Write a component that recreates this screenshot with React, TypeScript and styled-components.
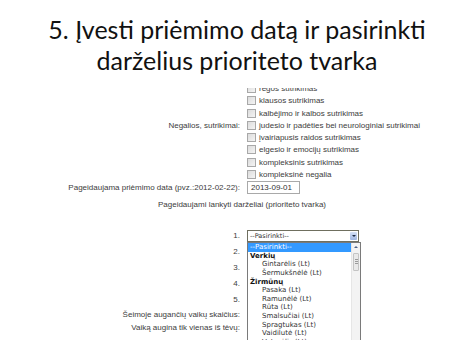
import React from "react";
import styled, { createGlobalStyle } from "styled-components";

const GlobalStyle = createGlobalStyle`
  html, body {
    margin: 0;
    padding: 0;
    background: #ffffff;
  }
`;

// Slide
const Slide = styled.div`
  width: 474px;
  height: 355px;
  overflow: hidden;
  background: #ffffff;
  display: flex;
  flex-direction: column;
`;

const Title = styled.h1`
  margin: 0;
  padding-top: 14px;
  height: 74px;
  font-family: Lato, "Open Sans", sans-serif;
  font-weight: 400;
  font-size: 25px;
  line-height: 31px;
  text-align: center;
  color: #111111;
`;

// Cropped screenshot of the web form
const Shot = styled.div`
  height: 252px;
  overflow: hidden;
  font-family: "Liberation Sans", Arial, sans-serif;
  font-size: 8px;
  color: #3c3c3c;
`;

const Form = styled.div`
  display: flex;
  flex-direction: column;
  margin-top: -18px;
`;

const Row = styled.div<{ $h?: number; $mt?: number }>`
  display: grid;
  grid-template-columns: 240px 1fr;
  column-gap: 7px;
  align-items: center;
  height: ${(p) => (p.$h ? `${p.$h}px` : "auto")};
  margin-top: ${(p) => p.$mt ?? 0}px;
`;

const Label = styled.div`
  text-align: right;
  white-space: nowrap;
`;

const Caption = styled.div<{ $mt: number }>`
  margin-top: ${(p) => p.$mt}px;
  height: 10px;
  line-height: 10px;
  text-align: center;
  padding-left: 10px;
`;

const CheckList = styled.div`
  display: flex;
  flex-direction: column;
`;

const CheckRow = styled.div`
  display: flex;
  align-items: center;
  gap: 3px;
  height: 12.3px;
  white-space: nowrap;
`;

const Box = styled.span`
  width: 7px;
  height: 7px;
  border: 1px solid #a8a8a8;
  background: linear-gradient(135deg, #dcdcdc, #f4f4f4);
  flex-shrink: 0;
`;

const TextInput = styled.div`
  width: 48px;
  height: 11px;
  border: 1px solid #a9a9a9;
  padding-left: 3px;
  line-height: 11px;
  color: #333;
`;

const SelectWrap = styled.div`
  position: relative;
  width: 112px;
`;

const Select = styled.div`
  height: 10px;
  border: 1px solid #6f6f5f;
  display: flex;
  align-items: center;
  background: #fff;
  font-family: "DejaVu Sans", Verdana, sans-serif;
  font-size: 6.5px;
  color: #333;
`;

const SelectText = styled.span`
  flex: 1;
  padding-left: 2px;
`;

const ArrowBtn = styled.span`
  width: 7px;
  height: 8px;
  margin-right: 1px;
  border-radius: 1px;
  background: linear-gradient(#d5e1f6, #9fb6e2);
  display: flex;
  align-items: center;
  justify-content: center;
`;

const Tri = styled.span<{ $up?: boolean }>`
  width: 0;
  height: 0;
  border-left: 2px solid transparent;
  border-right: 2px solid transparent;
  ${(p) =>
    p.$up ? "border-bottom: 2px solid #4d6185;" : "border-top: 2px solid #1d2a44;"}
`;

// Open dropdown list lying over the form
const Popup = styled.div`
  position: absolute;
  top: 12px;
  left: 0;
  width: 112px;
  height: 110px;
  border: 1px solid #7a7a7a;
  background: #ffffff;
  display: flex;
  overflow: hidden;
  z-index: 2;
`;

const Options = styled.div`
  flex: 1;
  padding-top: 0.5px;
  font-family: "DejaVu Sans", Verdana, sans-serif;
  font-size: 7px;
  line-height: 8.6px;
  color: #333;
`;

const Option = styled.div<{ $kind?: "selected" | "group" | "item" }>`
  height: 8.6px;
  white-space: nowrap;
  padding-left: ${(p) => (p.$kind === "item" ? 14 : 2)}px;
  font-weight: ${(p) => (p.$kind === "group" ? 700 : 400)};
  color: ${(p) => (p.$kind === "selected" ? "#ffffff" : p.$kind === "group" ? "#111" : "#333")};
  background: ${(p) => (p.$kind === "selected" ? "#3399ff" : "transparent")};
`;

const Scrollbar = styled.div`
  width: 8px;
  background: #f3f3f3;
  border-left: 1px solid #e6e6e6;
  display: flex;
  flex-direction: column;
  align-items: center;
`;

const ScrollBtn = styled.div`
  width: 8px;
  height: 9px;
  display: flex;
  align-items: center;
  justify-content: center;
`;

const Thumb = styled.div`
  width: 6px;
  height: 18px;
  margin-top: 1px;
  border: 1px solid #c4c4c4;
  border-radius: 1px;
  box-sizing: border-box;
  background: #e9e9e9;
  display: flex;
  flex-direction: column;
  align-items: center;
  justify-content: center;
  gap: 1px;
`;

const Grip = styled.span`
  width: 3px;
  height: 1px;
  background: #9a9a9a;
`;

const checks = [
  "intelekto sutrikimas",
  "regos sutrikimas",
  "klausos sutrikimas",
  "kalbėjimo ir kalbos sutrikimas",
  "judesio ir padėties bei neurologiniai sutrikimai",
  "įvairiapusis raidos sutrikimas",
  "elgesio ir emocijų sutrikimas",
  "kompleksinis sutrikimas",
  "kompleksinė negalia",
];

const options: { text: string; kind: "selected" | "group" | "item" }[] = [
  { text: "--Pasirinkti--", kind: "selected" },
  { text: "Verkių", kind: "group" },
  { text: "Gintarėlis (Lt)", kind: "item" },
  { text: "Šermukšnėlė (Lt)", kind: "item" },
  { text: "Žirmūnų", kind: "group" },
  { text: "Pasaka (Lt)", kind: "item" },
  { text: "Ramunėlė (Lt)", kind: "item" },
  { text: "Rūta (Lt)", kind: "item" },
  { text: "Smalsučiai (Lt)", kind: "item" },
  { text: "Spragtukas (Lt)", kind: "item" },
  { text: "Vaidilutė (Lt)", kind: "item" },
  { text: "Vyturėlis (Lt)", kind: "item" },
];

const PrioritySelect = ({ open }: { open?: boolean }) => (
  <SelectWrap>
    <Select>
      <SelectText>--Pasirinkti--</SelectText>
      <ArrowBtn>
        <Tri />
      </ArrowBtn>
    </Select>
    {open && (
      <Popup>
        <Options>
          {options.map((o) => (
            <Option key={o.text} $kind={o.kind}>
              {o.text}
            </Option>
          ))}
        </Options>
        <Scrollbar>
          <ScrollBtn>
            <Tri $up />
          </ScrollBtn>
          <Thumb>
            <Grip />
            <Grip />
            <Grip />
          </Thumb>
        </Scrollbar>
      </Popup>
    )}
  </SelectWrap>
);

export default function App() {
  return (
    <>
      <GlobalStyle />
      <Slide>
        <Title>
          5. Įvesti priėmimo datą ir pasirinkti
          <br />
          darželius prioriteto tvarka
        </Title>
        <Shot>
          <Form>
            <Row>
              <Label>Negalios, sutrikimai:</Label>
              <CheckList>
                {checks.map((c) => (
                  <CheckRow key={c}>
                    <Box />
                    {c}
                  </CheckRow>
                ))}
              </CheckList>
            </Row>
            <Row $h={13}>
              <Label>Pageidaujama priėmimo data (pvz.:2012-02-22):</Label>
              <TextInput>2013-09-01</TextInput>
            </Row>
            <Caption $mt={6}>Pageidaujami lankyti darželiai (prioriteto tvarka)</Caption>
            {[1, 2, 3, 4, 5].map((n) => (
              <Row key={n} $h={12} $mt={n === 1 ? 20 : 4}>
                <Label>{n}.</Label>
                <PrioritySelect open={n === 1} />
              </Row>
            ))}
            <Row $h={12} $mt={3}>
              <Label>Šeimoje augančių vaikų skaičius:</Label>
              <span />
            </Row>
            <Row $h={12} $mt={1}>
              <Label>Vaiką augina tik vienas iš tėvų:</Label>
              <span />
            </Row>
          </Form>
        </Shot>
      </Slide>
    </>
  );
}
